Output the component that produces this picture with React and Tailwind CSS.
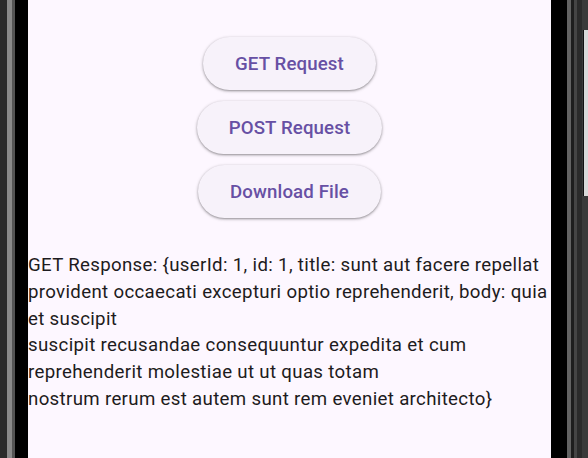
import React from "react";

const responseText =
  "GET Response: {userId: 1, id: 1, title: sunt aut facere repellat provident occaecati excepturi optio reprehenderit, body: quia et suscipit\nsuscipit recusandae consequuntur expedita et cum\nreprehenderit molestiae ut ut quas totam\nnostrum rerum est autem sunt rem eveniet architecto}";

function ActionButton({ label }) {
  return (
    <button className="h-[53.33px] px-[32px] rounded-full bg-[#f7f2fa] text-[#6750a4] text-[18.67px] font-medium tracking-[0.13px] shadow-[0_1px_2px_rgba(0,0,0,0.3),0_1px_3px_1px_rgba(0,0,0,0.12)]">
      {label}
    </button>
  );
}

export default function App() {
  return (
    <div className="flex h-[458px] w-[588px] overflow-hidden bg-black font-['Roboto',sans-serif]">
      {/* left bezel */}
      <div className="w-[7px] bg-[#2b2b2b]" />
      <div className="w-[5px] bg-[#8a8a8a]" />
      <div className="w-[3px] bg-[#555555]" />
      <div className="w-[13px] bg-black" />

      {/* screen */}
      <div className="flex w-[523px] flex-col bg-[#fdf7ff]">
        <div className="flex flex-col items-center gap-[10.67px] pt-[37px]">
          <ActionButton label="GET Request" />
          <ActionButton label="POST Request" />
          <ActionButton label="Download File" />
        </div>
        <p className="mt-[34px] whitespace-pre-wrap text-[18.67px] leading-[26.67px] tracking-[0.33px] text-[#1d1b20]">
          {responseText}
        </p>
      </div>

      {/* right bezel */}
      <div className="w-[16px] bg-black" />
      <div className="w-[4px] bg-[#636363]" />
      <div className="w-[3px] bg-[#1e1e1e]" />
      <div className="w-[3px] bg-[#454545]" />
      <div className="w-[5px] bg-[#2b2b2b]" />
      <div className="relative w-[6px] bg-[#3a3a3a]">
        <div className="absolute left-[1px] top-[30px] h-[166px] w-[5px] border-l border-[#111] bg-[#d9d9d9]" />
      </div>
    </div>
  );
}
